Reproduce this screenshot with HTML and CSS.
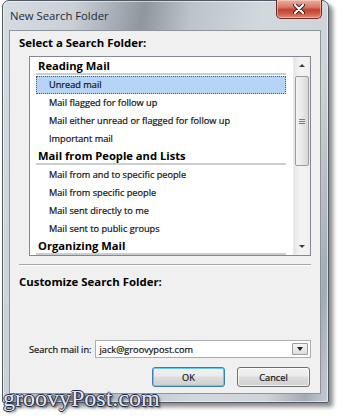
FILE: index.html
```html
<!DOCTYPE html>
<html lang="en">
<head>
    <meta charset="UTF-8">
    <meta name="viewport" content="width=device-width, initial-scale=1.0">
    <title>New Search Folder</title>
    <link rel="stylesheet" href="styles.css">
</head>
<body>
    <div class="window">
        <div class="titlebar">
            <span class="title">New Search Folder</span>
            <button class="close" aria-label="Close">
                <svg width="12" height="10" viewBox="0 0 12 10">
                    <path d="M2 1 L10 9 M10 1 L2 9" stroke="#3a1a16" stroke-width="4" stroke-linecap="round"/>
                    <path d="M2 1 L10 9 M10 1 L2 9" stroke="#ffffff" stroke-width="2.2" stroke-linecap="round"/>
                </svg>
            </button>
        </div>

        <div class="client">
            <h2 class="section-title">Select a Search Folder:</h2>

            <div class="listbox">
                <ul class="folder-list">
                    <li class="group">Reading Mail</li>
                    <li class="item selected">Unread mail</li>
                    <li class="item">Mail flagged for follow up</li>
                    <li class="item">Mail either unread or flagged for follow up</li>
                    <li class="item">Important mail</li>
                    <li class="group">Mail from People and Lists</li>
                    <li class="item">Mail from and to specific people</li>
                    <li class="item">Mail from specific people</li>
                    <li class="item">Mail sent directly to me</li>
                    <li class="item">Mail sent to public groups</li>
                    <li class="group">Organizing Mail</li>
                </ul>
                <div class="scrollbar">
                    <div class="scroll-btn"><span class="arrow-up"></span></div>
                    <div class="scroll-thumb"><span class="grip"></span></div>
                    <div class="scroll-track"></div>
                    <div class="scroll-btn"><span class="arrow-down"></span></div>
                </div>
            </div>

            <hr class="separator">
            <h2 class="section-title customize">Customize Search Folder:</h2>

            <div class="spacer"></div>

            <div class="search-row">
                <label class="search-label">Search mail in:</label>
                <div class="combo">
                    <span class="combo-value">jack@groovypost.com</span>
                    <span class="combo-drop"><span class="arrow-down"></span></span>
                </div>
            </div>

            <div class="buttons">
                <button class="btn btn-default">OK</button>
                <button class="btn">Cancel</button>
            </div>
        </div>
    </div>

    <div class="watermark">groovyPost.com</div>
</body>
</html>
```

FILE: styles.css
```css
* {
    margin: 0;
    padding: 0;
    box-sizing: border-box;
}

body {
    font-family: "Open Sans", "Noto Sans", sans-serif;
    font-size: 9.2px;
    color: #111;
    background-color: #fff;
    width: 344px;
    height: 419px;
    overflow: hidden;
    position: relative;
}

.window {
    margin-left: 2px;
    width: 327px;
    height: 403px;
    border: 1px solid #4e5964;
    border-radius: 7px 7px 2px 2px;
    background: linear-gradient(100deg, #d6dce1 0%, #c9d0d6 18%, #8f969d 36%, #bcc3ca 48%, #d3d8dd 66%, #cfd4d9 84%, #a3abb3 94%, #c6ccd2 100%);
    box-shadow: inset 0 0 0 1px rgba(255, 255, 255, 0.55), 4px 4px 4px rgba(0, 0, 0, 0.45);
    padding: 0 7px 8px 6px;
    display: flex;
    flex-direction: column;
}

.titlebar {
    height: 29px;
    display: flex;
    justify-content: space-between;
    align-items: flex-start;
}

.title {
    margin-top: 7px;
    margin-left: 1px;
    font-size: 11.3px;
    color: #1c2b3a;
}

.close {
    width: 46px;
    height: 19px;
    margin-top: -1px;
    margin-right: -1px;
    border: 1px solid #6e2b22;
    border-top: none;
    border-radius: 0 0 5px 5px;
    background: linear-gradient(#eab0a3, #d67967 40%, #c2402f 55%, #d06250 80%, #e08c78);
    box-shadow: inset 0 0 0 1px rgba(255, 220, 210, 0.5);
    display: flex;
    align-items: center;
    justify-content: center;
}

.client {
    flex: 1;
    background-color: #f0f0f0;
    border: 1px solid #8c949c;
    padding: 4px 9px 6px 9px;
    display: flex;
    flex-direction: column;
}

.section-title {
    font-size: 11.4px;
    font-weight: bold;
    line-height: 16px;
    color: #000;
}

.listbox {
    margin: 5px 0 0 10px;
    height: 200px;
    border: 1px solid #828790;
    background-color: #fff;
    display: flex;
}

.folder-list {
    flex: 1;
    list-style: none;
    padding: 1px 7px 0 6px;
    overflow: hidden;
}

.folder-list li {
    white-space: nowrap;
}

.group {
    height: 17px;
    line-height: 15px;
    margin-bottom: 1px;
    padding-left: 2px;
    font-weight: bold;
    font-size: 11.2px;
    color: #000;
    border-bottom: 2px solid #c9ced3;
}

.item {
    height: 18px;
    line-height: 18px;
    padding-left: 13px;
    -webkit-text-stroke: 0.2px #111;
}

.item.selected {
    line-height: 16px;
    background-color: #b5d4f6;
    border: 1px dotted #4b5a6b;
    padding-left: 12px;
}

.scrollbar {
    width: 17px;
    display: flex;
    flex-direction: column;
    background: linear-gradient(to right, #e6e6e6, #f4f4f4 40%, #f0f0f0);
    border-left: 1px solid #ececec;
}

.scroll-btn {
    height: 17px;
    display: flex;
    align-items: center;
    justify-content: center;
}

.scroll-thumb {
    height: 90px;
    margin: 2px 1px 0 1px;
    border: 1px solid #9b9b9b;
    border-radius: 2px;
    background: linear-gradient(to right, #f4f4f4, #e9e9e9 50%, #d8d8d8);
    display: flex;
    align-items: center;
    justify-content: center;
}

.grip {
    width: 6px;
    height: 5px;
    border-top: 1px solid #7c7c7c;
    border-bottom: 1px solid #7c7c7c;
    position: relative;
}

.grip::after {
    content: "";
    position: absolute;
    left: 0;
    right: 0;
    top: 1px;
    border-top: 1px solid #7c7c7c;
}

.scroll-track {
    flex: 1;
}

.arrow-up,
.arrow-down {
    width: 0;
    height: 0;
    border-left: 3px solid transparent;
    border-right: 3px solid transparent;
}

.arrow-up {
    border-bottom: 3px solid #3c3c3c;
}

.arrow-down {
    border-top: 3px solid #3c3c3c;
}

.separator {
    margin-top: 8px;
    border: none;
    border-top: 1px solid #a9a9a9;
    border-bottom: 1px solid #fff;
}

.customize {
    margin-top: 8px;
}

.spacer {
    flex: 1;
}

.search-row {
    display: flex;
    align-items: center;
    margin-left: 10px;
}

.search-label {
    margin-right: 4px;
    -webkit-text-stroke: 0.2px #111;
}

.combo {
    flex: 1;
    height: 18px;
    border: 1px solid #abadb3;
    background-color: #fff;
    display: flex;
    align-items: center;
    justify-content: space-between;
    padding: 0 2px 0 3px;
    -webkit-text-stroke: 0.2px #111;
}

.combo-drop {
    width: 16px;
    height: 12px;
    border: 1px solid #9c9c9c;
    border-radius: 1px;
    background: linear-gradient(#f5f5f5, #dedede);
    display: flex;
    align-items: center;
    justify-content: center;
}

.combo-drop .arrow-down {
    border-left-width: 3px;
    border-right-width: 3px;
    border-top: 4px solid #202020;
}

.buttons {
    display: flex;
    justify-content: flex-end;
    gap: 12px;
    margin-top: 9px;
    padding-right: 1px;
}

.btn {
    width: 73px;
    height: 20px;
    font-family: inherit;
    font-size: 9.2px;
    color: #111;
    -webkit-text-stroke: 0.2px #111;
    border: 1px solid #707070;
    border-radius: 3px;
    background: linear-gradient(#f2f2f2, #ebebeb 45%, #dddddd 50%, #cfcfcf);
    box-shadow: inset 0 0 0 1px rgba(255, 255, 255, 0.7);
}

.btn-default {
    border-color: #3c7fb1;
    box-shadow: inset 0 0 0 1px #68c9f0;
}

.watermark {
    position: absolute;
    left: 3px;
    top: 386px;
    font-family: "Liberation Serif", serif;
    font-size: 24px;
    line-height: 24px;
    color: #e4e8ee;
    text-shadow: -1px 0 #1d2c4a, 1px 0 #1d2c4a, 0 -1px #1d2c4a, 0 1px #1d2c4a, 2px 2px 2px rgba(0, 0, 0, 0.5);
}
```
